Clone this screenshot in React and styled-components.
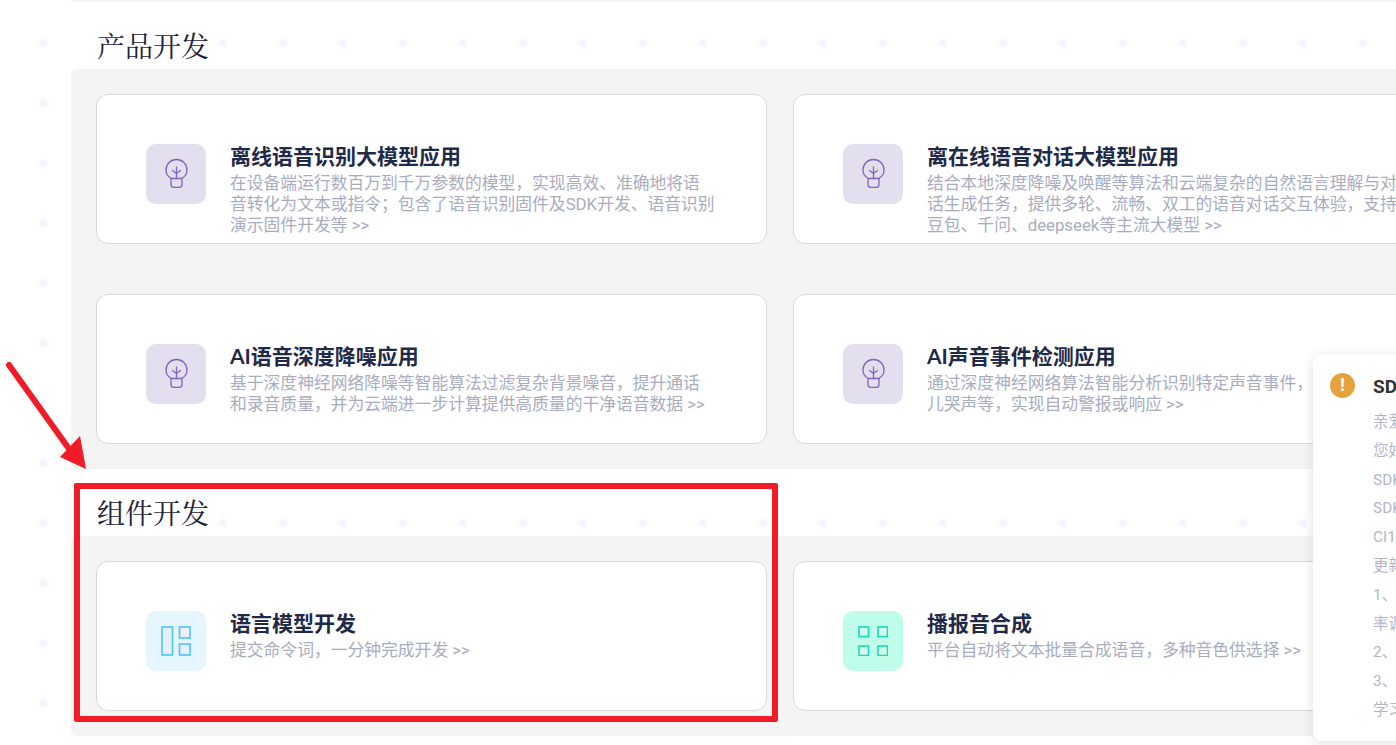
import React from 'react';
import styled, { createGlobalStyle } from 'styled-components';

const GlobalStyle = createGlobalStyle`
  html, body {
    margin: 0;
    padding: 0;
    background: #fff;
  }
  body {
    font-family: "Roboto", "Noto Sans CJK SC", sans-serif;
  }
`;

// --- Page ---
const Page = styled.div`
  position: relative;
  width: 1396px;
  height: 745px;
  overflow: hidden;
  padding-left: 71px;
  box-sizing: border-box;
  background-color: #fff;
  background-image: radial-gradient(circle at center, #f4f5fe 0, #f4f5fe 3px, transparent 5px);
  background-size: 60px 60px;
  background-position: 13px 13px;
`;

const TopEdge = styled.div`
  width: 1400px;
  height: 2px;
  background: #f4f4f4;
  border-radius: 0 0 0 4px;
`;

const SectionTitle = styled.h2`
  margin: 0;
  height: 67px;
  box-sizing: border-box;
  padding: 23px 0 0 26px;
  font-family: "Noto Serif CJK SC", "Liberation Serif", serif;
  font-size: 28px;
  line-height: 40px;
  font-weight: 400;
  color: #1c2238;
`;

const Panel = styled.section`
  width: 1400px;
  box-sizing: border-box;
  padding: 25px;
  background: #f4f4f4;
  border-radius: 6px;
  display: grid;
  grid-template-columns: 671px 671px;
  grid-auto-rows: 150px;
  column-gap: 26px;
  row-gap: 50px;
`;

const Card = styled.div`
  box-sizing: border-box;
  display: flex;
  align-items: flex-start;
  gap: 24px;
  padding: 49px 0 0 49px;
  background: #fff;
  border: 1px solid #d9d9d9;
  border-radius: 12px;
  overflow: hidden;
`;

const IconBox = styled.div`
  flex: none;
  width: 60px;
  height: 60px;
  border-radius: 10px;
  display: flex;
  align-items: center;
  justify-content: center;
  background: ${(p) => p.$bg};
`;

const CardText = styled.div`
  width: 486px;
  flex: none;
  margin-top: -2px;
`;

const CardTitle = styled.h3`
  margin: 0 0 4px;
  font-family: "Lato", "Noto Sans CJK SC", sans-serif;
  font-size: 21px;
  line-height: 27px;
  font-weight: 700;
  color: #1f2a48;
`;

const CardDesc = styled.p`
  margin: 0;
  font-size: 16.8px;
  line-height: 21px;
  color: #a9acbe;
`;

// --- Notification ---
const Toast = styled.aside`
  position: absolute;
  left: 1313px;
  top: 354px;
  width: 330px;
  height: 387px;
  box-sizing: border-box;
  display: flex;
  gap: 18px;
  padding: 19px 0 0 17px;
  background: #fff;
  border-radius: 8px;
  box-shadow: 0 2px 12px rgba(0, 0, 0, 0.12);
`;

const ToastIcon = styled.div`
  flex: none;
  width: 25px;
  height: 25px;
  border-radius: 50%;
  background: #e6a23c;
  color: #fff;
  font-family: "Liberation Sans", sans-serif;
  font-size: 18px;
  font-weight: 700;
  line-height: 25px;
  text-align: center;
`;

const ToastBody = styled.div`
  flex: none;
  width: 290px;
`;

const ToastTitle = styled.div`
  font-size: 19px;
  font-weight: 700;
  line-height: 28px;
  color: #303133;
  margin-bottom: 7px;
`;

const ToastLine = styled.div`
  font-size: 15.4px;
  line-height: 28.8px;
  color: #b4b6c6;
  white-space: nowrap;
`;

// --- Red annotation drawn on top of the screenshot ---
const Highlight = styled.div`
  position: absolute;
  left: 74px;
  top: 483px;
  width: 704px;
  height: 239px;
  box-sizing: border-box;
  border: 6px solid #f01c28;
  border-radius: 2px;
`;

const ArrowSvg = styled.svg`
  position: absolute;
  left: 0;
  top: 355px;
`;

const BulbIcon = () => (
  <svg width="24" height="32" viewBox="-0.5 0 24 32" fill="none" stroke="#8363c0" strokeWidth="1.3" strokeLinecap="round" strokeLinejoin="round">
    <path d="M7 20.5C3.4 18.8 1.5 15.6 1.5 12C1.5 6.2 6.2 1.5 12 1.5S22.5 6.2 22.5 12C22.5 15.6 20.6 18.8 17 20.5" />
    <path d="M6.5 20.5H17.5V26.5C17.5 28.2 16.4 29.3 14.7 29.3H9.3C7.6 29.3 6.5 28.2 6.5 26.5Z" />
    <path d="M12 20.5V9M12 15.5L8 12.5M12 15.5L16 12.5" />
  </svg>
);

const LayoutIcon = () => (
  <svg width="30" height="30" viewBox="0 0 30 30" fill="#e9f0fb" stroke="#4cc4ff" strokeWidth="1.6">
    <rect x="1" y="1" width="10.5" height="28" />
    <rect x="18.5" y="1" width="10.5" height="11" />
    <rect x="18.5" y="18" width="10.5" height="11" />
  </svg>
);

const GridIcon = () => (
  <svg width="30" height="30" viewBox="0 0 30 30" fill="#d4f7ee" stroke="#16dcb6" strokeWidth="1.6">
    <rect x="1" y="1" width="9.5" height="9.5" />
    <rect x="20" y="1" width="9.5" height="9.5" />
    <rect x="1" y="20" width="9.5" height="9.5" />
    <rect x="20" y="20" width="9.5" height="9.5" />
  </svg>
);

const PURPLE = '#e3dfee';

const products = [
  {
    title: '离线语音识别大模型应用',
    desc: '在设备端运行数百万到千万参数的模型，实现高效、准确地将语音转化为文本或指令；包含了语音识别固件及SDK开发、语音识别演示固件开发等 >>',
  },
  {
    title: '离在线语音对话大模型应用',
    desc: '结合本地深度降噪及唤醒等算法和云端复杂的自然语言理解与对话生成任务，提供多轮、流畅、双工的语音对话交互体验，支持豆包、千问、deepseek等主流大模型 >>',
  },
  {
    title: 'AI语音深度降噪应用',
    desc: '基于深度神经网络降噪等智能算法过滤复杂背景噪音，提升通话和录音质量，并为云端进一步计算提供高质量的干净语音数据 >>',
  },
  {
    title: 'AI声音事件检测应用',
    desc: '通过深度神经网络算法智能分析识别特定声音事件，如鸣笛、婴儿哭声等，实现自动警报或响应 >>',
  },
];

const toastLines = [
  '亲爱的开发者：',
  '您好，平台固件已更新',
  'SDK版本已更新',
  'SDK适用芯片型号',
  'CI13系列芯片',
  '更新内容如下',
  '1、优化语音识别',
  '率调整',
  '2、修复已知问题',
  '3、更新文档',
  '学习资料',
];

const App = () => (
  <Page>
    <GlobalStyle />
    <TopEdge />
    <SectionTitle>产品开发</SectionTitle>
    <Panel>
      {products.map((item) => (
        <Card key={item.title}>
          <IconBox $bg={PURPLE}>
            <BulbIcon />
          </IconBox>
          <CardText>
            <CardTitle>{item.title}</CardTitle>
            <CardDesc>{item.desc}</CardDesc>
          </CardText>
        </Card>
      ))}
    </Panel>
    <SectionTitle>组件开发</SectionTitle>
    <Panel>
      <Card>
        <IconBox $bg="#e5f6ff">
          <LayoutIcon />
        </IconBox>
        <CardText>
          <CardTitle>语言模型开发</CardTitle>
          <CardDesc>提交命令词，一分钟完成开发 &gt;&gt;</CardDesc>
        </CardText>
      </Card>
      <Card>
        <IconBox $bg="#bffcea">
          <GridIcon />
        </IconBox>
        <CardText>
          <CardTitle>播报音合成</CardTitle>
          <CardDesc>平台自动将文本批量合成语音，多种音色供选择 &gt;&gt;</CardDesc>
        </CardText>
      </Card>
    </Panel>

    <Toast>
      <ToastIcon>!</ToastIcon>
      <ToastBody>
        <ToastTitle>SDK更新通知</ToastTitle>
        {toastLines.map((line) => (
          <ToastLine key={line}>{line}</ToastLine>
        ))}
      </ToastBody>
    </Toast>

    <Highlight />
    <ArrowSvg width="100" height="125" viewBox="0 0 100 125">
      <path d="M9 10L72 98" stroke="#f01c28" strokeWidth="6" strokeLinecap="round" fill="none" />
      <path d="M86 114L60 102L80 81Z" fill="#f01c28" />
    </ArrowSvg>
  </Page>
);

export default App;
